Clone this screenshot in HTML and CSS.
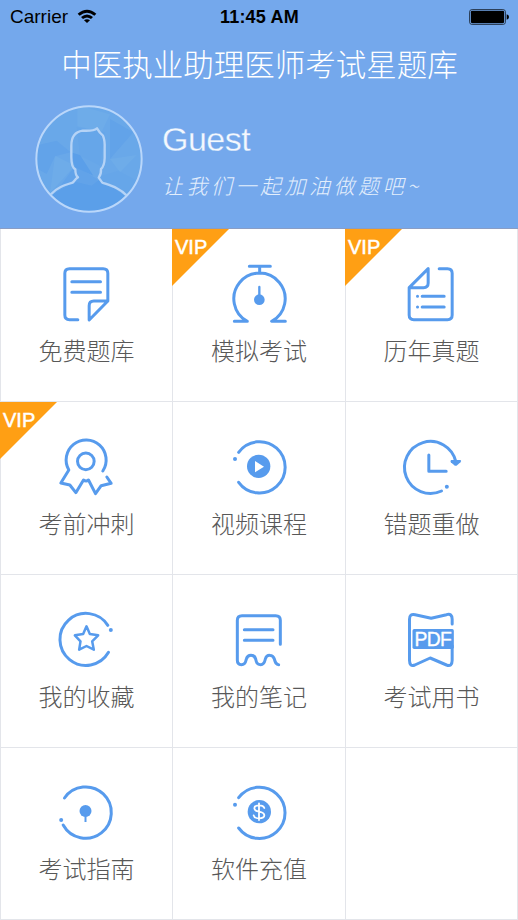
FILE: index.html
```html
<!DOCTYPE html>
<html lang="zh-CN">
<head>
<meta charset="utf-8">
<title>中医执业助理医师考试星题库</title>
<link rel="stylesheet" href="styles.css">
</head>
<body>
<div class="app">
  <header class="header">
    <div class="status">
      <div class="status-left">
        <span class="carrier">Carrier</span>
        <svg class="wifi" viewBox="0 0 60 42"><path d="M2 14Q30-9 58 14L52 20Q30 2 8 20Z"/><path d="M12 24Q30 9 48 24L42 30Q30 21 18 30Z"/><path d="M21 34Q30 27 39 34L30 42Z"/></svg>
      </div>
      <span class="time">11:45 AM</span>
      <svg class="battery" viewBox="0 0 120 48"><rect x="1.5" y="1.5" width="108" height="45" rx="8" fill="none" stroke="#000" stroke-opacity=".75" stroke-width="2.5"/><rect x="5.500" y="5.500" width="100" height="37" rx="4"/><path d="M113 16q7 2 7 8t-7 8z"/></svg>
    </div>
    <h1 class="title">中医执业助理医师考试星题库</h1>
    <div class="profile">
      <svg class="avatar" viewBox="45 28 324 324">
        <defs><clipPath id="disc"><circle cx="207" cy="190" r="156"/></clipPath></defs>
        <g clip-path="url(#disc)">
          <path fill="#69a8e9" d="M45 28h324v324H45z"/>
          <path fill="#6eace9" d="M172 28 270 56 245 108 172 92ZM105 180 165 210 90 292ZM270 190 350 178 300 230Z"/>
          <path fill="#62a3e9" d="M45 150 110 135 152 170 105 182 80 235 45 215ZM270 70 340 110 270 190ZM165 210 240 255 190 352 100 300Z"/>
          <path fill="#66a6e9" d="M170 95 255 110 240 210 180 180ZM230 245 295 225 360 260 240 352Z"/>
          <path fill="#5b9fe9" d="M152 170 180 178 220 240 165 215ZM90 300 165 258 215 270 240 250 315 300 260 352H80Z"/>
        </g>
        <path class="person" d="M93 296C110 275 135 268 158 261C164 255 166 250 174 245Q166 240 166 221Q154 215 154 185V150Q154 110 188 105Q220 107 231 98Q239 112 249 120Q255 134 254 158V187Q253 212 243 220Q244 236 236 246L247 261C275 271 300 278 319 299"/>
        <circle class="ring" cx="207" cy="190" r="158"/>
      </svg>
      <div class="who">
        <div class="name">Guest</div>
        <div class="motto">让我们一起加油做题吧~</div>
      </div>
    </div>
  </header>
  <main class="grid">
    <a class="cell">
      <svg class="icon" viewBox="163.5 102 192 192"><path d="M235 275H210Q196 275 196 261V136Q196 122 210 122H311Q325 122 325 136V219L269 276V233Q269 219 283 219H325M217 161H303M217 193H303"/></svg>
      <span class="label">免费题库</span>
    </a>
    <a class="cell">
      <span class="vip"><span class="vip-text">VIP</span></span>
      <svg class="icon" viewBox="165 102 192 192"><path d="M232 115H295M263 115V136M187 280H226A77 77 0 1 1 299 280H340"/><path class="thin" d="M262 177V215"/><circle class="solid" cx="262" cy="215" r="16"/></svg>
      <span class="label">模拟考试</span>
    </a>
    <a class="cell">
      <span class="vip"><span class="vip-text">VIP</span></span>
      <svg class="icon" viewBox="166.5 102 192 192"><path d="M287 122H312Q326 122 326 136V261Q326 275 312 275H211Q197 275 197 261V179L254 122V165Q254 179 240 179H197M236 205H302M236 237H302M222 205h.1M222 237h.1"/></svg>
      <span class="label">历年真题</span>
    </a>
    <a class="cell">
      <span class="vip"><span class="vip-text">VIP</span></span>
      <svg class="icon" viewBox="163.5 105 192 192"><path d="M310 213A60 60 0 1 0 208 210L184 249L211 255L229 278L252 240Q260 246 267 240L288 281L305 257L335 250L322 231"/><circle cx="259" cy="184" r="25"/></svg>
      <span class="label">考前冲刺</span>
    </a>
    <a class="cell">
      <svg class="icon" viewBox="165 105 192 192"><path d="M200 157A77 77 0 1 1 200 247"/><circle class="solid" cx="189" cy="177" r="6"/><circle class="solid" cx="260" cy="199" r="35"/><path class="white" d="M249 183V217L276 200Z"/></svg>
      <span class="label">视频课程</span>
    </a>
    <a class="cell">
      <svg class="icon" viewBox="682.5 105 192 192"><path d="M810 273A78 78 0 1 1 853 185M772 165V214H824"/><path class="solid" d="M839 180H867Q871 183 867 187L855 197H850L838 187Q835 183 839 180Z"/><circle class="solid" cx="826" cy="260" r="6"/></svg>
      <span class="label">错题重做</span>
    </a>
    <a class="cell">
      <svg class="icon" viewBox="163.5 102 192 192"><path d="M325 154A78 78 0 1 0 327 235"/><circle class="solid" cx="334" cy="168" r="6"/><path class="star" d="M261 157L271 180L296 184L278 202L283 227L261 216L239 227L243 202L226 184L251 180Z"/></svg>
      <span class="label">我的收藏</span>
    </a>
    <a class="cell">
      <svg class="icon" viewBox="51 102 192 192"><path d="M211 211V139Q211 125 197 125H96Q82 125 82 139V259Q82 272 94 272C108 272 107 261 109 255C113 240 133 240 137 255C139 264 140 272 152 272C163 272 164 263 166 255C170 240 189 241 193 255C196 266 198 272 206 272M103 167H189M103 199H189"/></svg>
      <span class="label">我的笔记</span>
    </a>
    <a class="cell">
      <svg class="icon" viewBox="568.5 102 192 192"><path d="M728 150V136Q728 117 711 122L665 133L617 122Q600 118 600 136V259Q600 279 616 273L662 252L711 273Q728 279 728 259V215"/><rect class="solid" x="609" y="165" width="124" height="60" rx="5"/><text class="pdf" x="615" y="216" textLength="112">PDF</text></svg>
      <span class="label">考试用书</span>
    </a>
    <a class="cell">
      <svg class="icon" viewBox="163.5 102 192 192"><path d="M195 153A77 77 0 1 1 191 234"/><circle class="solid" cx="185" cy="219" r="6"/><circle class="solid" cx="258" cy="192" r="18"/><path class="solid" d="M255 205h6v20h-6z"/></svg>
      <span class="label">考试指南</span>
    </a>
    <a class="cell">
      <svg class="icon" viewBox="681 102 192 192"><path d="M716 152A77 77 0 1 1 716 243"/><circle class="solid" cx="705" cy="173" r="6"/><circle class="solid" cx="778" cy="194" r="35"/><path class="dollar" d="M793 183Q790 175 777 175Q763 175 763 184Q763 191 777 194Q793 197 793 205Q793 214 777 214Q763 214 761 205M777 169V219"/></svg>
      <span class="label">软件充值</span>
    </a>
    <div class="cell"></div>
  </main>
</div>
</body>
</html>
```
FILE: styles.css
```css
* { box-sizing: border-box; }
body {
  margin: 0;
  font-family: "Liberation Sans", "Noto Sans CJK SC", sans-serif;
}
.app {
  width: 518px;
  height: 920px;
  overflow: hidden;
  background: #fff;
}
.header {
  height: 229px;
  background: #74a8ec;
  border-bottom: 1px solid #8a9dc4;
}
.status {
  display: grid;
  grid-template-columns: 1fr auto 1fr;
  align-items: center;
  height: 34px;
  padding: 0 9px 0 10px;
}
.status-left { display: flex; align-items: center; gap: 9px; }
.carrier { font-size: 19px; line-height: 34px; }
.wifi { width: 20px; height: 14px; margin-top: -2px; }
.time { font-size: 18px; font-weight: bold; line-height: 34px; letter-spacing: .2px; }
.battery { width: 40px; height: 16px; justify-self: end; }
.title {
  margin: 6px 0 0;
  padding-left: 1px;
  text-align: center;
  font-family: "Noto Sans CJK SC", sans-serif;
  font-size: 30.5px;
  font-weight: 300;
  line-height: 46px;
  color: #fff;
  white-space: nowrap;
}
.profile { display: flex; gap: 19px; padding: 19px 0 0 35px; }
.avatar { width: 108px; height: 108px; flex: none; }
.person { fill: none; stroke: #b5d3f6; stroke-width: 7; stroke-linejoin: round; }
.ring { fill: none; stroke: #bad7fa; stroke-width: 6; }
.who { padding-top: 15px; color: #f3f8fe; }
.name { font-size: 34px; line-height: 38px; letter-spacing: -.5px; -webkit-text-stroke: .3px #74a8ec; }
.motto {
  margin-top: 12px;
  font-family: "Noto Sans CJK SC", sans-serif;
  font-size: 21px;
  font-style: italic;
  font-weight: 300;
  line-height: 30px;
  letter-spacing: 3.500px;
  white-space: nowrap;
  color: #e3eefc;
}
.grid {
  display: grid;
  grid-template-columns: 172px 173px 172px;
  grid-template-rows: 173px 173px 173px 172px;
  border-left: 1px solid #e3e5ea;
}
.cell {
  position: relative;
  display: flex;
  flex-direction: column;
  align-items: center;
  padding-top: 33px;
  border-right: 1px solid #e3e5ea;
  border-bottom: 1px solid #e3e5ea;
}
.icon {
  width: 64px;
  height: 64px;
  fill: none;
  stroke: #579bed;
  stroke-width: 9;
  stroke-linecap: round;
  stroke-linejoin: round;
}
.cell:nth-child(3n) .icon,
.cell:nth-child(3n+1) .icon { margin-left: -1px; }
.icon .thin { stroke-width: 7; }
.icon .star { stroke-width: 7.500; }
.icon .solid { fill: #579bed; stroke: none; }
.icon .white { fill: #fff; stroke: none; }
.icon .dollar { stroke: #fff; stroke-width: 5.500; }
.icon .pdf { font-size: 58px; fill: #fff; stroke: #fff; stroke-width: 1; }
.label {
  margin-top: 8px;
  font-family: "Noto Sans CJK SC", sans-serif;
  font-size: 24px;
  font-weight: 300;
  line-height: 32px;
  color: #585858;
}
.cell:nth-child(n+10) .label { margin-top: 7px; }
.vip {
  position: absolute;
  top: 0;
  left: -1px;
  width: 57px;
  height: 57px;
  background: #ff9f14;
  clip-path: polygon(0 0, 100% 0, 0 100%);
}
.vip-text {
  display: block;
  padding: 7px 0 0 3px;
  font-size: 20px;
  line-height: 22px;
  color: #fff;
  -webkit-text-stroke: .5px #fff;
}
```
